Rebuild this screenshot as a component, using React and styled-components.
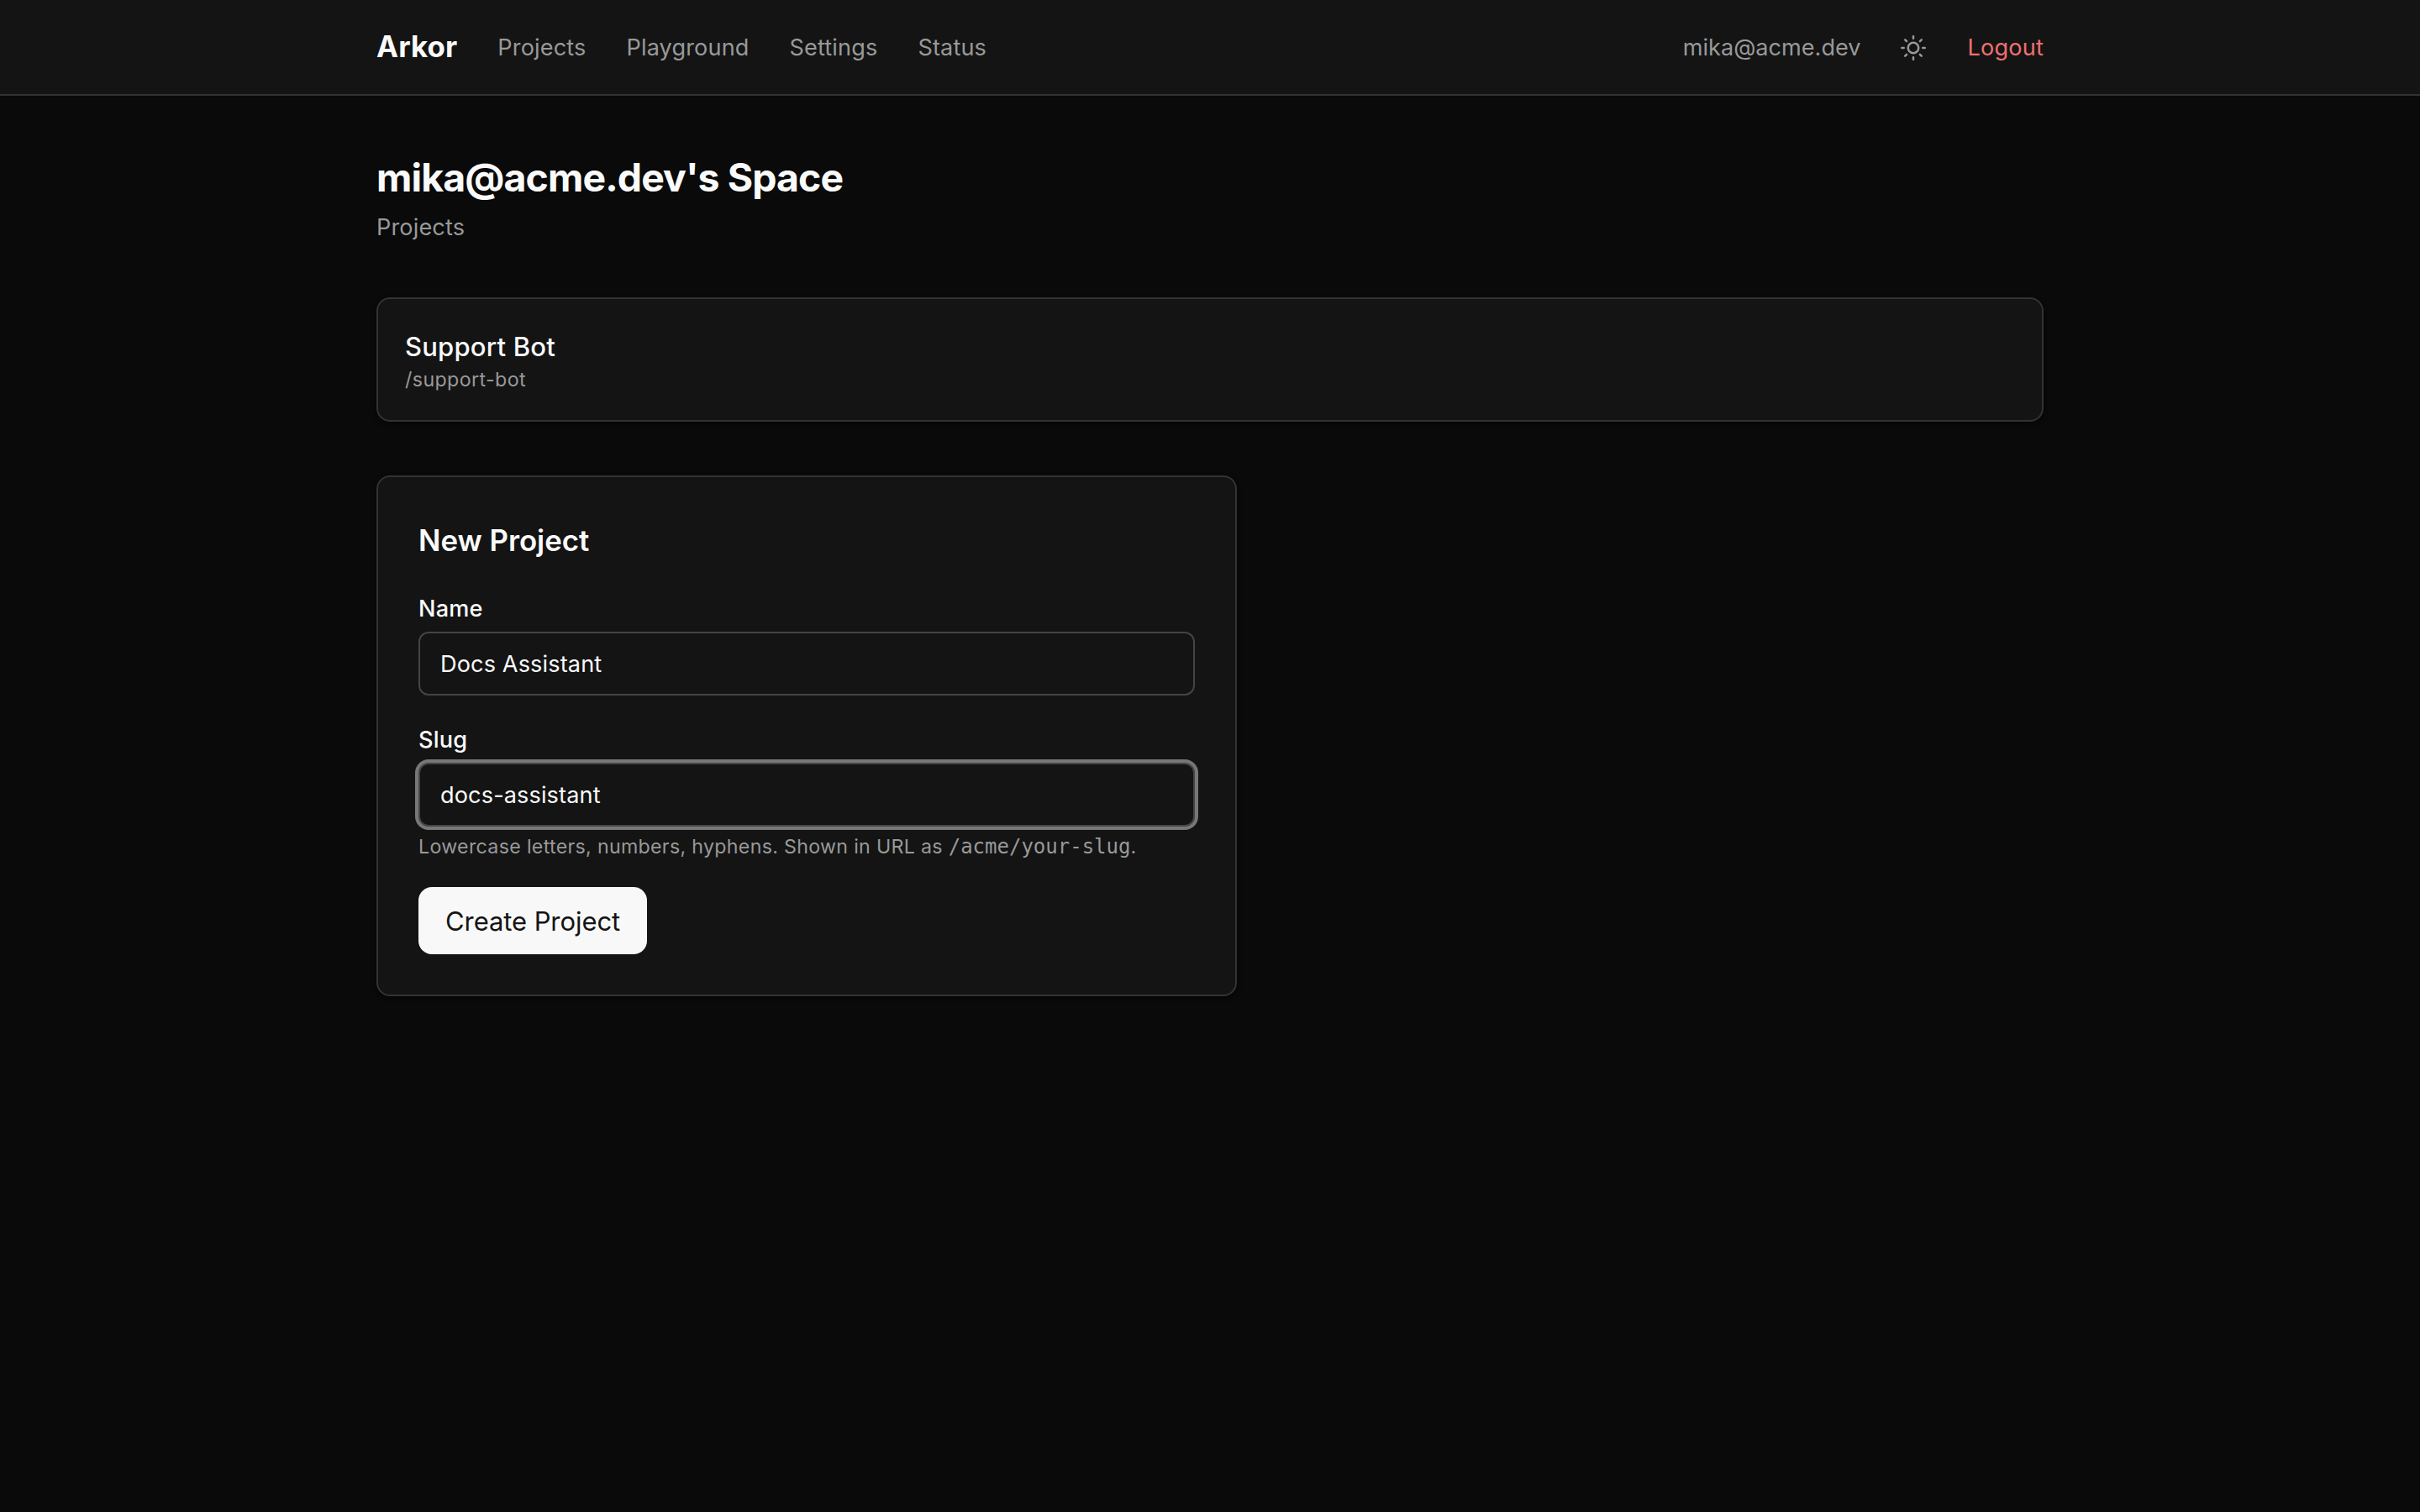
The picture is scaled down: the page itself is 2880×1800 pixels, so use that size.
import React from "react";
import styled, { createGlobalStyle } from "styled-components";

const App = () => {
  return (
    <>
      <GlobalStyle />
      <Header>
        <HeaderInner>
          <NavGroup>
            <Brand href="#">Arkor</Brand>
            <NavLink href="#">Projects</NavLink>
            <NavLink href="#">Playground</NavLink>
            <NavLink href="#">Settings</NavLink>
            <NavLink href="#">Status</NavLink>
          </NavGroup>
          <NavGroup>
            <Email>mika@acme.dev</Email>
            <ThemeToggle aria-label="Toggle theme">
              <SunIcon />
            </ThemeToggle>
            <Logout>Logout</Logout>
          </NavGroup>
        </HeaderInner>
      </Header>
      <Main>
        <Title>mika@acme.dev's Space</Title>
        <Subtitle>Projects</Subtitle>
        <ProjectCard>
          <ProjectName>Support Bot</ProjectName>
          <ProjectSlug>/support-bot</ProjectSlug>
        </ProjectCard>
        <FormCard>
          <FormTitle>New Project</FormTitle>
          <Field>
            <Label htmlFor="name">Name</Label>
            <Input id="name" defaultValue="Docs Assistant" />
          </Field>
          <Field>
            <Label htmlFor="slug">Slug</Label>
            <Input id="slug" defaultValue="docs-assistant" $focused />
            <Hint>
              Lowercase letters, numbers, hyphens. Shown in URL as{" "}
              <code>/acme/your-slug</code>.
            </Hint>
          </Field>
          <SubmitButton type="button">Create Project</SubmitButton>
        </FormCard>
      </Main>
    </>
  );
};

export default App;

const SunIcon = () => (
  <svg
    width="30"
    height="30"
    viewBox="0 0 24 24"
    fill="none"
    stroke="currentColor"
    strokeWidth="2"
    strokeLinecap="round"
    strokeLinejoin="round"
  >
    <circle cx="12" cy="12" r="5" />
    <path d="M12 1v2M12 21v2M4.22 4.22l1.42 1.42M18.36 18.36l1.42 1.42M1 12h2M21 12h2M4.22 19.78l1.42-1.42M18.36 5.64l1.42-1.42" />
  </svg>
);

const GlobalStyle = createGlobalStyle`
  :root {
    --bg: #0a0a0a;
    --surface: #141414;
    --border: #333333;
    --border-input: #444444;
    --ring: #777777;
    --text-primary: #fafafa;
    --text-secondary: #999999;
    --danger: #f07070;
    --shadow: 0 2px 6px rgba(0, 0, 0, 0.4), 0 2px 4px -2px rgba(0, 0, 0, 0.4);
  }
  * {
    box-sizing: border-box;
    margin: 0;
  }
  body {
    min-height: 100vh;
    background: var(--bg);
    color: var(--text-primary);
    font-family: Inter, "Liberation Sans", sans-serif;
    font-size: 27.1px;
    line-height: 41px;
    -webkit-font-smoothing: antialiased;
  }
`;

const Header = styled.header`
  background: var(--surface);
  border-bottom: 2px solid var(--border);
`;

const HeaderInner = styled.div`
  display: flex;
  align-items: center;
  justify-content: space-between;
  width: 1984px;
  height: 112px;
  margin: 0 auto;
`;

const NavGroup = styled.nav`
  display: flex;
  align-items: center;
  gap: 48px;
`;

const Brand = styled.a`
  padding-bottom: 2px;
  color: var(--text-primary);
  font-size: 34.8px;
  font-weight: 700;
  line-height: 56px;
  letter-spacing: 0.15px;
  text-decoration: none;
`;

const NavLink = styled.a`
  padding-top: 1px;
  color: var(--text-secondary);
  letter-spacing: 0.14px;
  text-decoration: none;
`;

const Email = styled.span`
  padding-top: 1px;
  color: var(--text-secondary);
`;

const ThemeToggle = styled.button`
  display: flex;
  padding: 2px 0 0;
  border: none;
  background: none;
  color: var(--text-secondary);
`;

const Logout = styled.button`
  margin-left: 1px;
  padding: 1px 0 0;
  border: none;
  background: none;
  color: var(--danger);
  font: inherit;
  letter-spacing: 0.2px;
`;

const Main = styled.main`
  width: 1984px;
  margin: 0 auto;
  padding: 64px 0;
`;

const Title = styled.h1`
  font-size: 46.4px;
  font-weight: 700;
  line-height: 66px;
  letter-spacing: -0.88px;
`;

const Subtitle = styled.p`
  margin-top: 6px;
  color: var(--text-secondary);
  letter-spacing: 0.14px;
`;

const Card = styled.section`
  background: var(--surface);
  border: 2px solid var(--border);
  border-radius: 16px;
  box-shadow: var(--shadow);
`;

const ProjectCard = styled(Card)`
  margin-top: 63px;
  padding: 32px;
`;

const ProjectName = styled.h2`
  margin-bottom: -1px;
  font-size: 31px;
  font-weight: 500;
  line-height: 49px;
  letter-spacing: 0.2px;
`;

const ProjectSlug = styled.p`
  color: var(--text-secondary);
  font-size: 23.2px;
  line-height: 32px;
  letter-spacing: 0.4px;
`;

const FormCard = styled(Card)`
  display: flex;
  flex-direction: column;
  gap: 32px;
  width: 1024px;
  margin-top: 64px;
  padding: 48px;
`;

const FormTitle = styled.h2`
  margin-bottom: 2px;
  font-size: 34.8px;
  font-weight: 600;
  line-height: 54px;
  letter-spacing: 0;
`;

const Field = styled.div`
  display: flex;
  flex-direction: column;
  gap: 8px;
`;

const Label = styled.label`
  margin-bottom: -1px;
  font-weight: 500;
  letter-spacing: 0.2px;
`;

const Input = styled.input`
  height: 76px;
  padding: 1px 24px 0;
  border: 2px solid var(--border-input);
  border-radius: 12px;
  outline: none;
  background: var(--surface);
  box-shadow: ${({ $focused }) => ($focused ? "0 0 0 4px var(--ring)" : "none")};
  color: var(--text-primary);
  font: inherit;
  letter-spacing: 0.13px;
`;

const Hint = styled.p`
  color: var(--text-secondary);
  font-size: 23.2px;
  line-height: 32px;
  letter-spacing: 0.31px;
  white-space: nowrap;

  code {
    font-family: "DejaVu Sans Mono", monospace;
    font-size: 24px;
    line-height: 1;
    letter-spacing: 0;
  }
`;

const SubmitButton = styled.button`
  align-self: flex-start;
  height: 80px;
  padding: 1px 32px 0;
  border: none;
  border-radius: 16px;
  background: #f8f8f8;
  color: var(--surface);
  font-family: inherit;
  font-size: 31px;
  letter-spacing: -0.08px;
`;
